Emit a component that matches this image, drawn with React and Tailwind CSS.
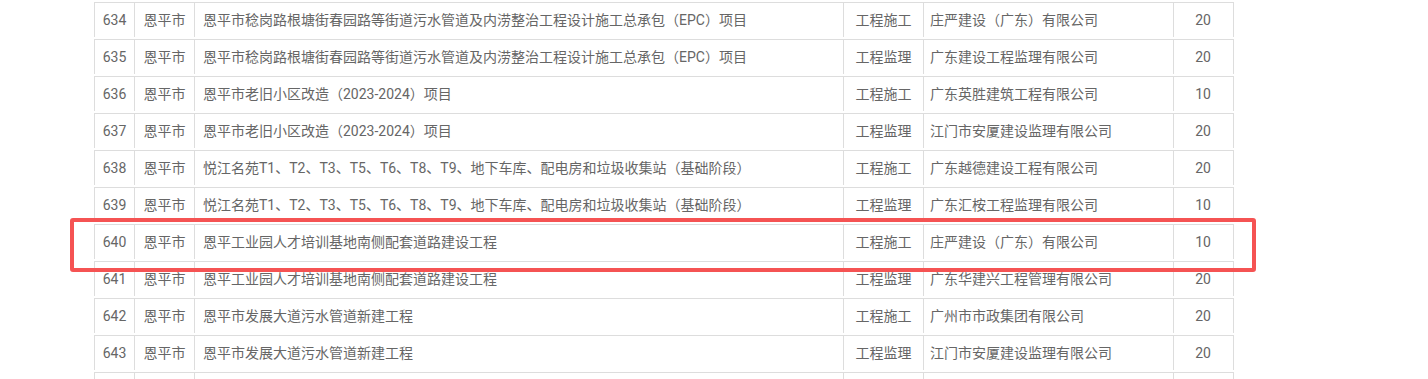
import React from "react";

const rows = [
  ["633", "", "", "", "", ""],
  ["634", "恩平市", "恩平市稔岗路根塘街春园路等街道污水管道及内涝整治工程设计施工总承包（EPC）项目", "工程施工", "庄严建设（广东）有限公司", "20"],
  ["635", "恩平市", "恩平市稔岗路根塘街春园路等街道污水管道及内涝整治工程设计施工总承包（EPC）项目", "工程监理", "广东建设工程监理有限公司", "20"],
  ["636", "恩平市", "恩平市老旧小区改造（2023-2024）项目", "工程施工", "广东英胜建筑工程有限公司", "10"],
  ["637", "恩平市", "恩平市老旧小区改造（2023-2024）项目", "工程监理", "江门市安厦建设监理有限公司", "20"],
  ["638", "恩平市", "悦江名苑T1、T2、T3、T5、T6、T8、T9、地下车库、配电房和垃圾收集站（基础阶段）", "工程施工", "广东越德建设工程有限公司", "20"],
  ["639", "恩平市", "悦江名苑T1、T2、T3、T5、T6、T8、T9、地下车库、配电房和垃圾收集站（基础阶段）", "工程监理", "广东汇桉工程监理有限公司", "10"],
  ["640", "恩平市", "恩平工业园人才培训基地南侧配套道路建设工程", "工程施工", "庄严建设（广东）有限公司", "10"],
  ["641", "恩平市", "恩平工业园人才培训基地南侧配套道路建设工程", "工程监理", "广东华建兴工程管理有限公司", "20"],
  ["642", "恩平市", "恩平市发展大道污水管道新建工程", "工程施工", "广州市市政集团有限公司", "20"],
  ["643", "恩平市", "恩平市发展大道污水管道新建工程", "工程监理", "江门市安厦建设监理有限公司", "20"],
  ["644", "", "", "", "", ""],
];

export default function App() {
  return (
    <div
      className="relative h-[379px] w-[1428px] overflow-hidden bg-white text-[14px] text-[#666]"
      style={{ fontFamily: 'Roboto, "Noto Sans CJK SC", sans-serif' }}
    >
      {/* table (first and last rows only show their edges) */}
      <div className="-mt-[34px] pl-[94px]">
        {rows.map(([no, city, name, kind, company, score]) => {
          const blank = !city;
          return (
            <div key={no} className="flex h-[37px] w-[1140px] border-b border-[#ddd] pb-[2px]">
              <div className="flex w-[40px] items-center justify-center border-l border-[#ddd]">{blank ? "" : no}</div>
              <div className="flex w-[60px] items-center justify-center border-l border-[#ddd]">{city}</div>
              <div className="flex w-[649px] items-center whitespace-nowrap border-l border-[#ddd] pl-[8px]">{name}</div>
              <div className="flex w-[80px] items-center justify-center border-l border-[#ddd]">{kind}</div>
              <div className="flex w-[250px] items-center whitespace-nowrap border-l border-[#ddd] pl-[6px]">{company}</div>
              <div className="flex w-[61px] items-center justify-center border-x border-[#ddd] pr-[1px]">{score}</div>
            </div>
          );
        })}
      </div>

      {/* highlight annotation */}
      <div className="pointer-events-none absolute left-[70px] top-[218px] h-[54px] w-[1186px] rounded-[3px] border-4 border-[#f55353]" />
    </div>
  );
}
